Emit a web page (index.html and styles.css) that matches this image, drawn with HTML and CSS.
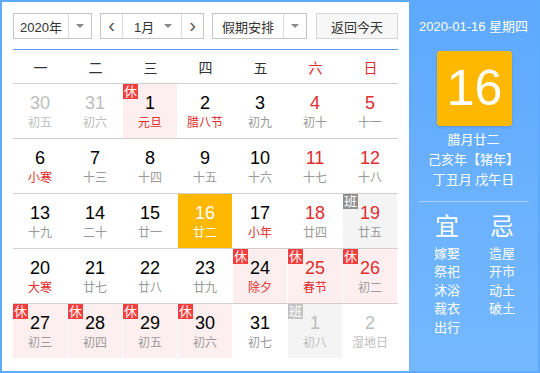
FILE: index.html
```html
<!DOCTYPE html>
<html lang="zh-CN">
<head>
    <meta charset="UTF-8">
    <title>万年历</title>
    <link rel="stylesheet" href="styles.css">
</head>
<body>

    <div class="calendar">
        <!-- Left: toolbar and month grid -->
        <div class="main">
            <div class="toolbar">
                <div class="select year-select">
                    <span class="select-text">2020年</span>
                    <span class="select-arrow"><i class="caret"></i></span>
                </div>
                <div class="month-group">
                    <span class="nav-btn">&lsaquo;</span>
                    <span class="month-select">
                        <span class="month-text">1月</span>
                        <i class="caret"></i>
                    </span>
                    <span class="nav-btn">&rsaquo;</span>
                </div>
                <div class="select holiday-select">
                    <span class="select-text">假期安排</span>
                    <span class="select-arrow"><i class="caret"></i></span>
                </div>
                <button class="today-btn">返回今天</button>
            </div>

            <div class="weekdays">
                <span>一</span><span>二</span><span>三</span><span>四</span><span>五</span>
                <span class="weekend">六</span><span class="weekend">日</span>
            </div>

            <div class="weeks" id="weeks"></div>
        </div>

        <!-- Right: selected day details -->
        <div class="side">
            <div class="side-date">2020-01-16 星期四</div>
            <div class="side-day">16</div>
            <div class="side-lunar">
                <div>腊月廿二</div>
                <div>己亥年【猪年】</div>
                <div>丁丑月 戊午日</div>
            </div>
            <div class="side-line"></div>
            <div class="almanac">
                <div class="almanac-col">
                    <div class="almanac-title">宜</div>
                    <div>嫁娶</div>
                    <div>祭祀</div>
                    <div>沐浴</div>
                    <div>裁衣</div>
                    <div>出行</div>
                </div>
                <div class="almanac-col">
                    <div class="almanac-title">忌</div>
                    <div>造屋</div>
                    <div>开市</div>
                    <div>动土</div>
                    <div>破土</div>
                </div>
            </div>
        </div>
    </div>

    <script>
        // day, lunar text, flags: o = other month, w = weekend, f = festival text,
        // r = rest day, b = work day, s = selected
        const days = [
            ['30', '初五', 'o'], ['31', '初六', 'o'], ['1', '元旦', 'fr'], ['2', '腊八节', 'f'],
            ['3', '初九', ''], ['4', '初十', 'w'], ['5', '十一', 'w'],
            ['6', '小寒', 'f'], ['7', '十三', ''], ['8', '十四', ''], ['9', '十五', ''],
            ['10', '十六', ''], ['11', '十七', 'w'], ['12', '十八', 'w'],
            ['13', '十九', ''], ['14', '二十', ''], ['15', '廿一', ''], ['16', '廿二', 's'],
            ['17', '小年', 'f'], ['18', '廿四', 'w'], ['19', '廿五', 'wb'],
            ['20', '大寒', 'f'], ['21', '廿七', ''], ['22', '廿八', ''], ['23', '廿九', ''],
            ['24', '除夕', 'fr'], ['25', '春节', 'wfr'], ['26', '初二', 'wr'],
            ['27', '初三', 'r'], ['28', '初四', 'r'], ['29', '初五', 'r'], ['30', '初六', 'r'],
            ['31', '初七', ''], ['1', '初八', 'ob'], ['2', '湿地日', 'o']
        ];

        const weeks = document.getElementById('weeks');
        for (let i = 0; i < days.length; i += 7) {
            const row = document.createElement('div');
            row.className = 'week';
            days.slice(i, i + 7).forEach(([num, lunar, flags]) => {
                const cell = document.createElement('div');
                cell.className = 'day';
                if (flags.includes('o')) cell.classList.add('other');
                if (flags.includes('w')) cell.classList.add('weekend');
                if (flags.includes('f')) cell.classList.add('festival');
                if (flags.includes('r')) cell.classList.add('rest');
                if (flags.includes('b')) cell.classList.add('work');
                if (flags.includes('s')) cell.classList.add('selected');

                let badge = '';
                if (flags.includes('r')) badge = '<span class="badge">休</span>';
                if (flags.includes('b')) badge = '<span class="badge">班</span>';

                cell.innerHTML = badge +
                    '<span class="day-num">' + num + '</span>' +
                    '<span class="day-lunar">' + lunar + '</span>';
                row.appendChild(cell);
            });
            weeks.appendChild(row);
        }
    </script>
</body>
</html>
```

FILE: styles.css
```css
/* General Page Style */
body {
    margin: 0;
    font-family: "Liberation Sans", "Noto Sans CJK SC", sans-serif;
    color: #333;
    background-color: #fff;
}

.calendar {
    display: flex;
    width: 540px;
    height: 373px;
    box-sizing: border-box;
    border: 2px solid #5eaafc;
}

/* Left Area */
.main {
    width: 385px;
    flex-shrink: 0;
    padding: 11px 11px 0;
}

/* Toolbar */
.toolbar {
    display: flex;
    height: 26px;
    font-size: 13px;
}

.select,
.month-group {
    display: flex;
    box-sizing: border-box;
    height: 26px;
    border: 1px solid #c4c4c4;
    background-color: #fff;
}

.select-text {
    display: flex;
    align-items: center;
    justify-content: center;
    border-right: 1px solid #dcdcdc;
}

.select-arrow {
    display: flex;
    align-items: center;
    justify-content: center;
    flex: 1;
}

.caret {
    width: 0;
    height: 0;
    border-left: 4px solid transparent;
    border-right: 4px solid transparent;
    border-top: 4px solid #8a8a8a;
}

.year-select {
    width: 79px;
}

.year-select .select-text {
    width: 54px;
}

.month-group {
    width: 104px;
    margin-left: 8px;
}

.nav-btn {
    display: flex;
    align-items: center;
    justify-content: center;
    width: 21px;
    font-size: 20px;
    color: #555;
    line-height: 1;
    padding-bottom: 2px;
    box-sizing: border-box;
}

.month-select {
    display: flex;
    align-items: center;
    width: 60px;
    box-sizing: border-box;
    padding: 0 9px 0 11px;
    border-left: 1px solid #dcdcdc;
    border-right: 1px solid #dcdcdc;
}

.month-text {
    flex: 1;
}

.holiday-select {
    width: 95px;
    margin-left: 8px;
}

.holiday-select .select-text {
    width: 70px;
}

.today-btn {
    width: 82px;
    height: 26px;
    margin-left: 9px;
    padding: 0;
    border: 1px solid #d6d6d6;
    background-color: #f7f7f7;
    font-family: inherit;
    font-size: 13px;
    color: #333;
}

/* Weekday Header */
.weekdays {
    display: grid;
    grid-template-columns: repeat(7, 55px);
    height: 33px;
    margin-top: 10px;
    border-top: 1px solid #5ea0ee;
    border-bottom: 1px solid #cfcfcf;
    font-size: 14px;
    align-items: center;
    justify-items: center;
}

.weekdays .weekend {
    color: #e02d2d;
}

/* Day Grid */
.week {
    display: grid;
    grid-template-columns: repeat(7, 54px);
    column-gap: 1px;
    border-bottom: 1px solid #cfcfcf;
}

.week:last-child {
    border-bottom: none;
}

.day {
    position: relative;
    height: 54px;
    display: flex;
    flex-direction: column;
    align-items: center;
    padding-top: 9px;
    box-sizing: border-box;
}

.day-num {
    font-size: 18px;
    line-height: 20px;
    color: #000;
}

.day-lunar {
    margin-top: 1px;
    font-size: 12px;
    line-height: 18px;
    color: #999;
}

.day.weekend .day-num,
.day.festival .day-lunar {
    color: #e02d2d;
}

.day.other .day-num,
.day.other .day-lunar {
    color: #bdbdbd;
}

.day.rest {
    background-color: #fdefef;
}

.day.work {
    background-color: #f4f4f4;
}

.day.selected {
    background-color: #ffb800;
}

.day.selected .day-num,
.day.selected .day-lunar {
    color: #fff;
}

/* Rest / Work Badges */
.badge {
    position: absolute;
    top: 0;
    left: 0;
    width: 15px;
    height: 15px;
    font-size: 13px;
    line-height: 15px;
    text-align: center;
    color: #fff;
    background-color: #f43d3d;
}

.day.work .badge {
    background-color: #8f8f8f;
}

.day.other.work .badge {
    background-color: #c4c4c4;
}

/* Right Panel */
.side {
    flex: 1;
    display: flex;
    flex-direction: column;
    align-items: center;
    color: #fff;
    background: linear-gradient(#5ea9fd, #75b8ff);
}

.side-date {
    margin-top: 16px;
    font-size: 13px;
    line-height: 18px;
}

.side-day {
    width: 75px;
    height: 75px;
    margin-top: 15px;
    margin-left: 2px;
    border-radius: 3px;
    background-color: #ffb800;
    box-shadow: 0 1px 3px rgba(0, 0, 0, 0.15);
    font-size: 50px;
    line-height: 75px;
    text-align: center;
}

.side-lunar {
    margin-top: 4px;
    font-size: 13px;
    line-height: 20px;
    text-align: center;
}

.side-line {
    width: 110px;
    height: 1px;
    margin-top: 11px;
    background-color: rgba(255, 255, 255, 0.45);
}

.almanac {
    display: flex;
    gap: 15px;
    margin-top: 10px;
    margin-left: 2px;
    font-size: 13px;
    line-height: 18.4px;
}

.almanac-col {
    width: 40px;
    text-align: center;
}

.almanac-title {
    font-size: 24px;
    line-height: 30px;
    margin-bottom: 3px;
}
```
